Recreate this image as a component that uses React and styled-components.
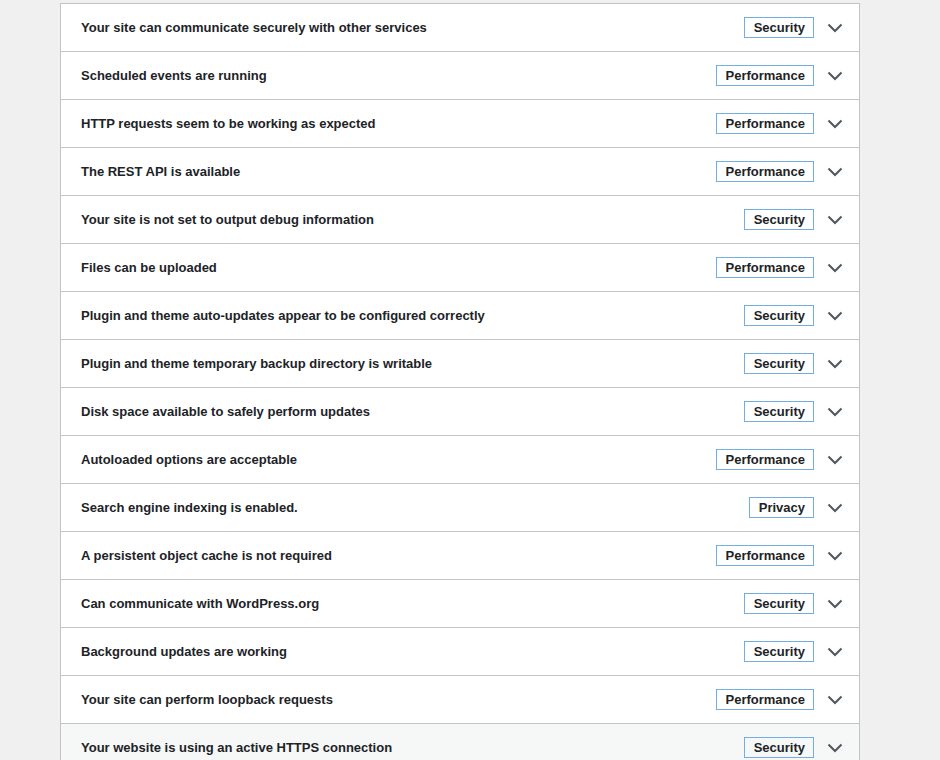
import React from "react";
import styled, { createGlobalStyle } from "styled-components";

const checks = [
  { title: "Your site can communicate securely with other services", badge: "Security" },
  { title: "Scheduled events are running", badge: "Performance" },
  { title: "HTTP requests seem to be working as expected", badge: "Performance" },
  { title: "The REST API is available", badge: "Performance" },
  { title: "Your site is not set to output debug information", badge: "Security" },
  { title: "Files can be uploaded", badge: "Performance" },
  { title: "Plugin and theme auto-updates appear to be configured correctly", badge: "Security" },
  { title: "Plugin and theme temporary backup directory is writable", badge: "Security" },
  { title: "Disk space available to safely perform updates", badge: "Security" },
  { title: "Autoloaded options are acceptable", badge: "Performance" },
  { title: "Search engine indexing is enabled.", badge: "Privacy" },
  { title: "A persistent object cache is not required", badge: "Performance" },
  { title: "Can communicate with WordPress.org", badge: "Security" },
  { title: "Background updates are working", badge: "Security" },
  { title: "Your site can perform loopback requests", badge: "Performance" },
  { title: "Your website is using an active HTTPS connection", badge: "Security", hover: true }
];

const GlobalStyle = createGlobalStyle`
  html, body {
    margin: 0;
    background: #f0f0f1;
    font-family: "Liberation Sans", Arial, sans-serif;
    color: #1d2327;
  }
`;

const Page = styled.div`
  padding-top: 3px;
  height: 757px;
  overflow: hidden;
`;

const Accordion = styled.div`
  margin: 0 80px 0 60px;
  background: #fff;
  border: 1px solid #c3c4c7;
  border-bottom: none;
`;

const Row = styled.div`
  display: flex;
  align-items: center;
  height: 47px;
  padding: 0 16px 0 20px;
  border-bottom: 1px solid #c3c4c7;
  background: ${(p) => (p.$hover ? "#f6f7f7" : "#fff")};
`;

const Title = styled.span`
  flex: 1;
  font-size: 13px;
  font-weight: 700;
  color: #1d2327;
`;

const Badge = styled.span`
  display: inline-block;
  box-sizing: border-box;
  height: 21px;
  line-height: 19px;
  padding: 0 8px 0 9px;
  border: 1px solid #72aee6;
  font-size: 13px;
  font-weight: 700;
  color: #1d2327;
  margin-right: 13px;
`;

const Chevron = () => (
  <svg width="16" height="16" viewBox="0 0 16 16" fill="none">
    <path d="M1.5 4.5 L8 11 L14.5 4.5" stroke="#50575e" strokeWidth="2" />
  </svg>
);

export default function App() {
  return (
    <Page>
      <GlobalStyle />
      <Accordion>
        {checks.map((c) => (
          <Row key={c.title} $hover={c.hover}>
            <Title>{c.title}</Title>
            <Badge>{c.badge}</Badge>
            <Chevron />
          </Row>
        ))}
      </Accordion>
    </Page>
  );
}
